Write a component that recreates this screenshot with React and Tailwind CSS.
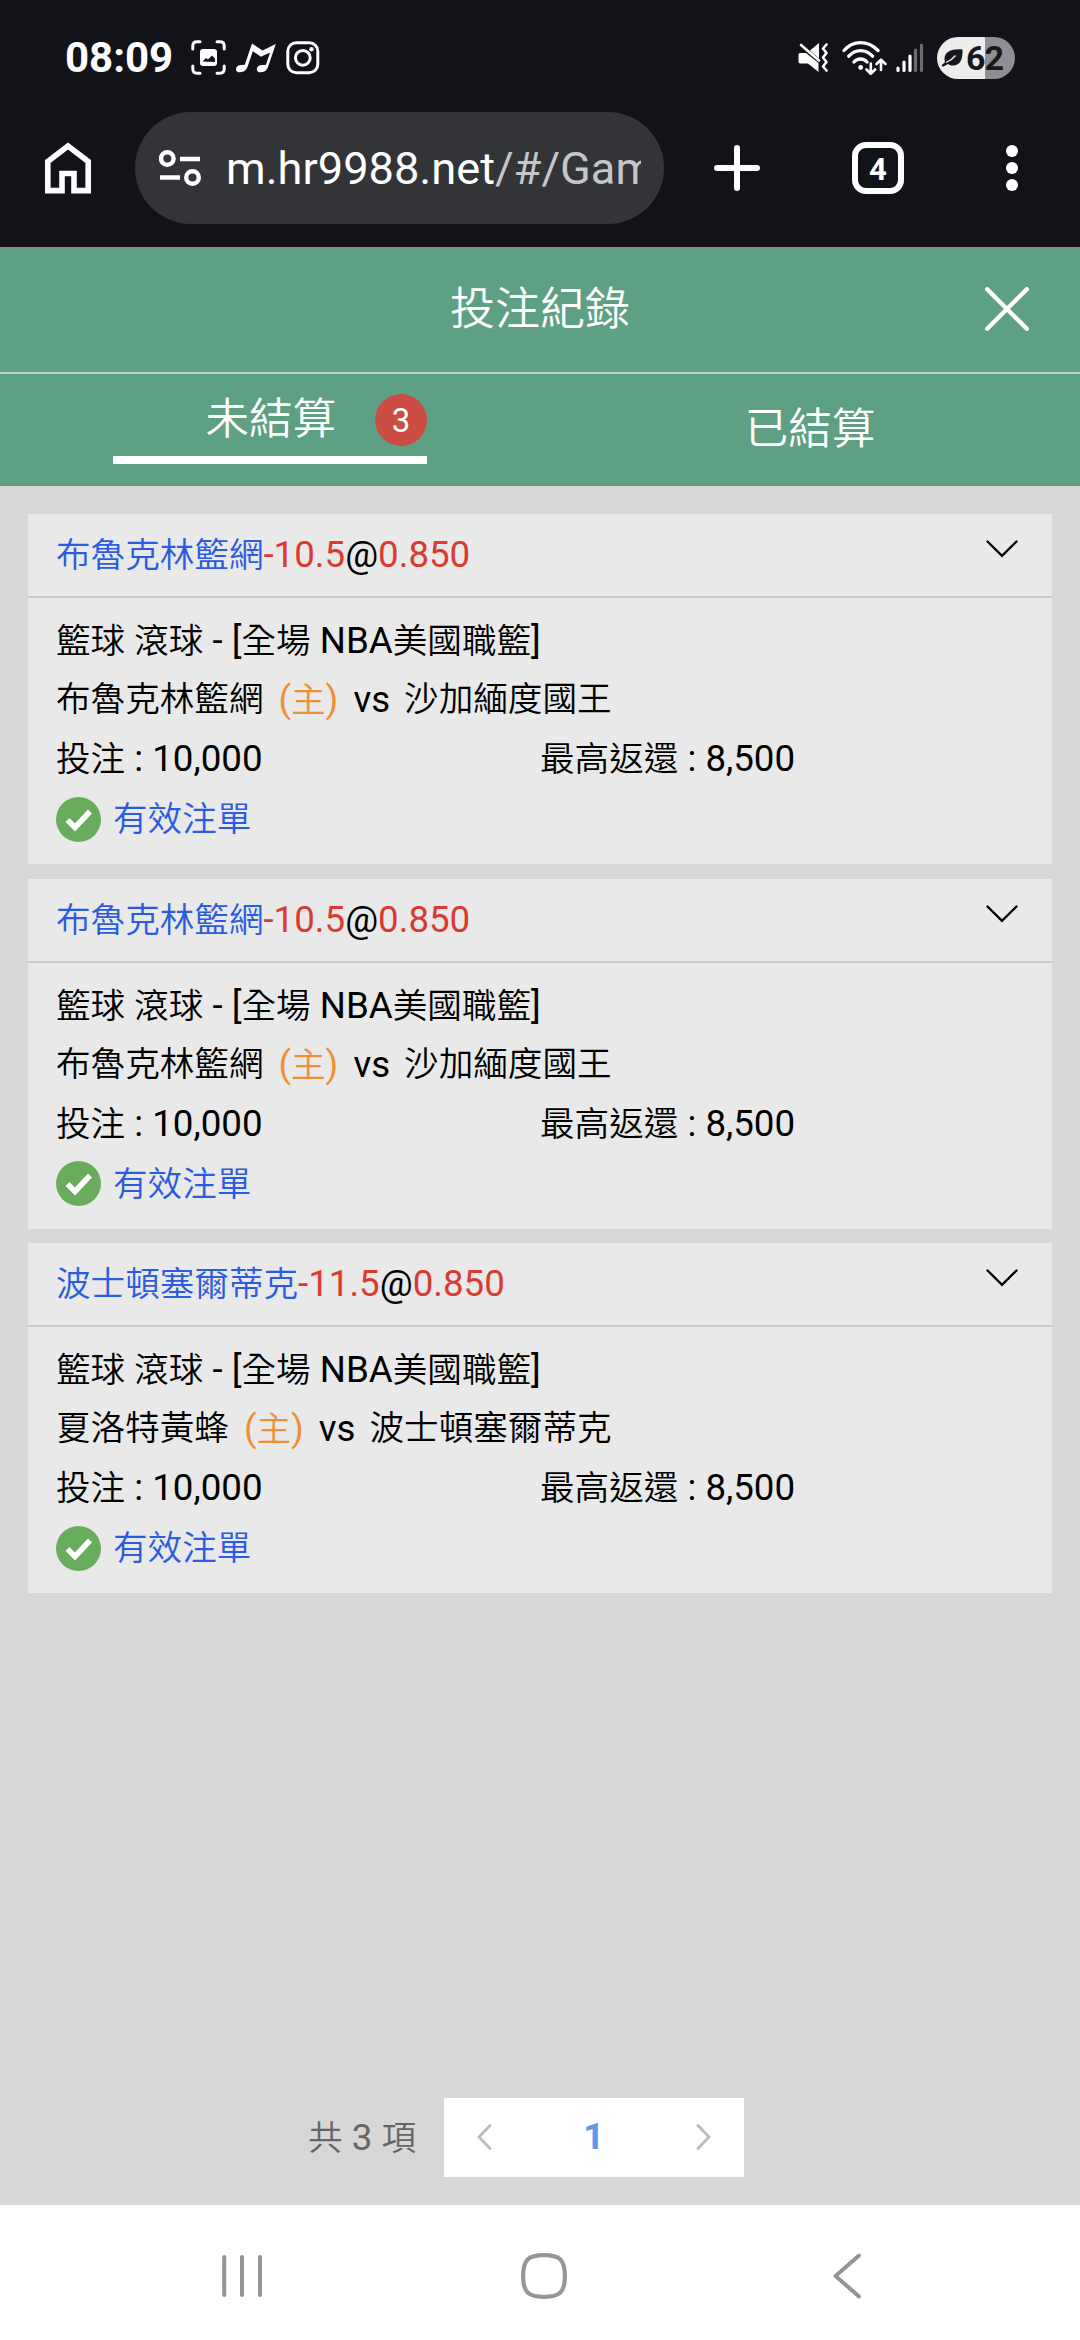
import { useState } from 'react'

const bets = [
  { id: 1, pick: '布魯克林籃網', line: '-10.5', odds: '0.850', home: '布魯克林籃網', away: '沙加緬度國王', stake: '10,000', payout: '8,500' },
  { id: 2, pick: '布魯克林籃網', line: '-10.5', odds: '0.850', home: '布魯克林籃網', away: '沙加緬度國王', stake: '10,000', payout: '8,500' },
  { id: 3, pick: '波士頓塞爾蒂克', line: '-11.5', odds: '0.850', home: '夏洛特黃蜂', away: '波士頓塞爾蒂克', stake: '10,000', payout: '8,500' },
]

// Latin runs are set a little larger than the Chinese around them
const Latin = ({ children, className = '' }) => (
  <span className={`text-[36.7px] font-normal whitespace-pre ${className}`}>{children}</span>
)

function StatusBar() {
  return (
    <div className="flex h-28 items-center pt-[3px] pl-[65px] pr-[65px] text-white">
      <span className="w-[126px] text-[42px] font-bold leading-none">08:09</span>

      <svg width="35" height="35" viewBox="0 0 35 35" fill="none" stroke="currentColor" strokeWidth="3" strokeLinecap="round">
        <path d="M9 1.8H6Q1.8 1.8 1.8 6V9M26 1.8h3q4.2 0 4.2 4.2v3M9 33.2H6Q1.8 33.2 1.8 29V26M26 33.2h3q4.2 0 4.2-4.2v-3" />
        <rect x="9" y="9" width="17" height="17" rx="3" fill="currentColor" stroke="none" />
        <path d="M11.5 21.5l3.5-3.5 2 1.5 4-4 3 3.2v3.3z" fill="#121318" stroke="none" />
      </svg>
      <svg className="ml-[10px]" width="40" height="30" viewBox="0 0 40 30" fill="currentColor">
        <path d="M16 .5l10.500 7L39.800 1 32 24q-1.800 5.200-7 5.200-4.200 0-4.200-2.800 0-4.200 5.800-4.400l3.400-.2 4-12.300-9 4.300-8.200-5.500L11.500 24q-2 5.200-7.500 5.200-4 0-4-2.800Q0 22.200 5.600 22l3.200-.2z" />
      </svg>
      <svg className="ml-[10px]" width="34" height="34" viewBox="0 0 34 34" fill="none" stroke="currentColor" strokeWidth="3">
        <rect x="1.800" y="1.800" width="30" height="30" rx="8.500" />
        <circle cx="16.800" cy="16.800" r="7.400" />
        <circle cx="25.500" cy="8.300" r="2.200" fill="currentColor" stroke="none" />
      </svg>

      <div className="ml-auto flex items-center">
        <svg width="31" height="30" viewBox="0 0 31 30" fill="none" stroke="currentColor" strokeWidth="2.600" strokeLinecap="round" strokeLinejoin="round">
          <path d="M2 10h6l12.500 10v9L10 20.500H2Q.5 20.500.5 18.500v-6.500Q.5 10 2 10z" fill="currentColor" stroke="none" />
          <path d="M21 0v15.500L12 7.600z" fill="currentColor" stroke="none" />
          <path d="M3 2l18 15.500" />
          <path d="M28.500 1.500l-3.500 4 3.500 4.500-3.500 4.500 3.500 4.500-3.500 4.500 3.500 4" />
        </svg>
        <svg className="ml-[13px]" width="46" height="34" viewBox="0 0 46 34" fill="none" stroke="currentColor" strokeWidth="3.300" strokeLinecap="round" strokeLinejoin="round">
          <path d="M2 9.500Q9 1.700 18.500 1.700T36 9.500M6.800 15.200q5-5.500 11.700-5.500t12 5.500M12 21q2.600-3 6.500-3t6.500 3" />
          <circle cx="18.700" cy="26.500" r="2.400" fill="currentColor" stroke="none" />
          <path d="M28.800 22.500v9.500M24.500 28.500l4.300 4.200 4.300-4.200M39 29v-10M34.500 23l4.500-4.300 4.500 4.300" strokeWidth="2.600" />
        </svg>
        <svg className="ml-[8px]" width="28" height="30" viewBox="0 0 28 30" fill="none" stroke="currentColor" strokeWidth="3.200" strokeLinecap="round">
          <path d="M2 25v2.500M8 19v8.500M14 13v14.500" />
          <path d="M19.500 7v20.500M25.500 2v25.500" stroke="#6c6c71" />
        </svg>
        <div className="ml-[13px] flex h-[42px] w-[78px] items-center rounded-full bg-linear-to-r from-[#ededee] from-[61%] to-[#8f8f93] to-[61%] pl-[4px] text-[#17181c]">
          <svg width="22" height="20" viewBox="0 0 22 20" fill="currentColor">
            <path d="M21.500 1.500c.3 9.500-2 16-9.500 16-2.500 0-4-.8-5-1.600L2 18.800l-1.500-1.600 3.500-3C1.500 5 9 .5 21.500 1.500z" />
            <path d="M5 14.500q6-2.500 9.500-7" fill="none" stroke="#ededee" strokeWidth="1.300" />
          </svg>
          <span className="ml-[3px] text-[34px] font-bold leading-none tracking-[-1px]">62</span>
        </div>
      </div>
    </div>
  )
}

function BrowserBar() {
  return (
    <div className="flex h-[135px] items-start text-white">
      <div className="flex h-28 w-full items-center">
        <svg className="ml-[45px] shrink-0" width="46" height="52" viewBox="0 0 46 52" fill="none" stroke="currentColor" strokeWidth="5.600">
          <path d="M2.800 19.500L23 4l20.200 15.500V48.600H29V31.500H17v17.100H2.800z" />
        </svg>
        <div className="ml-[44px] flex h-28 w-[529px] shrink-0 items-center rounded-full bg-[#333438] pl-[24px] pr-[23px]">
          <svg className="shrink-0" width="43" height="38" viewBox="0 0 43 38" fill="none" stroke="currentColor" strokeWidth="4.400">
            <circle cx="8.300" cy="9.500" r="6.300" />
            <path d="M21 10h20M1 28.500h20" />
            <circle cx="33.500" cy="28.500" r="6.300" />
          </svg>
          <span className="ml-[24px] overflow-hidden whitespace-nowrap pt-[2px] text-[45.200px] leading-[60px]">
            m.hr9988.net<span className="text-[#c5c5ca]">/#/Gam</span>
          </span>
        </div>
        <svg className="ml-[50px] shrink-0" width="46" height="46" viewBox="0 0 46 46" fill="none" stroke="currentColor" strokeWidth="6" strokeLinecap="round">
          <path d="M23 3v40M3 23h40" />
        </svg>
        <div className="ml-[92px] flex h-[52px] w-[52px] shrink-0 items-center justify-center rounded-[14px] border-[6px] border-white text-[31px] font-bold leading-none">
          <span className="pt-[2px]">4</span>
        </div>
        <svg className="ml-[102px] shrink-0" width="12" height="46" viewBox="0 0 12 46" fill="currentColor">
          <circle cx="6" cy="6" r="6" />
          <circle cx="6" cy="23" r="6" />
          <circle cx="6" cy="40" r="6" />
        </svg>
      </div>
    </div>
  )
}

function BetCard({ bet }) {
  return (
    <div className="h-[350px] bg-[#e9e9e9]">
      <div className="flex h-[84px] items-start justify-between border-b-2 border-[#c9c9c9] pl-7 pr-[34px]">
        <p className="leading-[81px]">
          <span className="text-[#2b5be0]">{bet.pick}</span>
          <Latin className="text-[#db3a31]">{bet.line}</Latin>
          <Latin>@</Latin>
          <Latin className="text-[#db3a31]">{bet.odds}</Latin>
        </p>
        <svg className="mt-[26px]" width="32" height="18" viewBox="0 0 32 18" fill="none" stroke="currentColor" strokeWidth="2.400" strokeLinecap="round">
          <path d="M1.500 1.500L16 15.800 30.500 1.500" />
        </svg>
      </div>
      <div className="px-7 pt-[13px]">
        <p className="h-[59px] leading-[59px]">
          籃球<Latin> </Latin>滾球<Latin> - [</Latin>全場<Latin> NBA</Latin>美國職籃<Latin>]</Latin>
        </p>
        <p className="flex h-[59px] leading-[59px]">
          {bet.home}
          <span className="ml-[15px] text-[#ec9038]"><Latin>(</Latin>主<Latin>)</Latin></span>
          <Latin className="ml-[15px]">vs</Latin>
          <span className="ml-[14px]">{bet.away}</span>
        </p>
        <div className="grid h-[59px] grid-cols-2 leading-[59px]">
          <p>投注<Latin> : {bet.stake}</Latin></p>
          <p>最高返還<Latin> : {bet.payout}</Latin></p>
        </div>
        <div className="flex h-[62px] items-center">
          <svg width="45" height="45" viewBox="0 0 45 45">
            <circle cx="22.500" cy="22.500" r="22.500" fill="#67ad5b" />
            <path d="M11.500 23l7.500 7.500L34 14.500" fill="none" stroke="#fff" strokeWidth="5.500" />
          </svg>
          <span className="ml-3 pt-[2px] text-[#2b5be0]">有效注單</span>
        </div>
      </div>
    </div>
  )
}

export default function App() {
  const [tab, setTab] = useState('open')

  return (
    <div className="flex h-[2340px] w-[1080px] flex-col overflow-hidden bg-[#d7d7d7] font-[Roboto,'Noto_Sans_CJK_TC',sans-serif] text-black">
      <header className="h-[247px] shrink-0 bg-[#121318]">
        <StatusBar />
        <BrowserBar />
      </header>

      <div className="shrink-0 bg-[#5ea084] font-[350] text-white">
        <div className="grid h-[127px] grid-cols-3 items-center border-b-2 border-[#b9d3c7] border-t-2 border-t-[#71988a] pb-[3px]">
          <h1 className="col-start-2 text-center text-[45px] leading-none">投注紀錄</h1>
          <button className="mr-[51px] justify-self-end">
            <svg width="44" height="44" viewBox="0 0 44 44" fill="none" stroke="currentColor" strokeWidth="4.400" strokeLinecap="round">
              <path d="M2.200 2.200l39.600 39.600M41.800 2.200L2.200 41.800" />
            </svg>
          </button>
        </div>
        <div className="flex h-[112px]">
          <div className="flex w-1/2 justify-center">
            <button onClick={() => setTab('open')}
              className={`mt-[8px] flex h-[82px] w-[314px] items-center justify-end border-b-8 pt-[2px] text-[43.500px] ${tab === 'open' ? 'border-white' : 'border-transparent'}`}>
              未結算
              <span className="ml-[39px] flex h-[52px] w-[52px] items-center justify-center rounded-full bg-[#cb4c40] text-[33px] font-normal leading-none">3</span>
            </button>
          </div>
          <button onClick={() => setTab('settled')} className="w-1/2 text-center text-[43.500px]">已結算</button>
        </div>
      </div>

      <main className="flex grow flex-col gap-[14.500px] px-7 pt-7 text-[34.600px] font-[350]">
        {bets.map(bet => <BetCard key={bet.id} bet={bet} />)}

        <div className="mb-7 mt-auto flex h-[79px] items-center pl-[280px]">
          <span className="text-[#666]">共<Latin> 3 </Latin>項</span>
          <div className="ml-[28px] flex h-full w-[300px] items-center justify-between bg-white px-[33px] pb-[2px] text-[#bcbcc0]">
            <svg width="15" height="26" viewBox="0 0 15 26" fill="none" stroke="currentColor" strokeWidth="2.800" strokeLinecap="round">
              <path d="M13 1.500L2 13l11 11.500" />
            </svg>
            <span className="text-[37px] font-bold text-[#6099e8]">1</span>
            <svg width="15" height="26" viewBox="0 0 15 26" fill="none" stroke="currentColor" strokeWidth="2.800" strokeLinecap="round">
              <path d="M2 1.500L13 13 2 24.500" />
            </svg>
          </div>
        </div>
      </main>

      <nav className="flex h-[135px] shrink-0 items-center bg-white pl-[222px] pt-[7px] text-[#959595]">
        <svg width="41" height="44" viewBox="0 0 41 44" fill="none" stroke="currentColor" strokeWidth="4" strokeLinecap="round">
          <path d="M2.200 3v38M20 3v38M38 3v38" />
        </svg>
        <svg className="ml-[258px]" width="46" height="46" viewBox="0 0 46 46" fill="none" stroke="currentColor" strokeWidth="4.200">
          <path d="M23 2.100C38 2.100 43.900 6 43.900 23S38 43.900 23 43.900 2.100 40 2.100 23 8 2.100 23 2.100z" />
        </svg>
        <svg className="ml-[266px]" width="29" height="46" viewBox="0 0 29 46" fill="none" stroke="currentColor" strokeWidth="4" strokeLinecap="round" strokeLinejoin="round">
          <path d="M26 2.500L2.500 23 26 43.500" />
        </svg>
      </nav>
    </div>
  )
}
